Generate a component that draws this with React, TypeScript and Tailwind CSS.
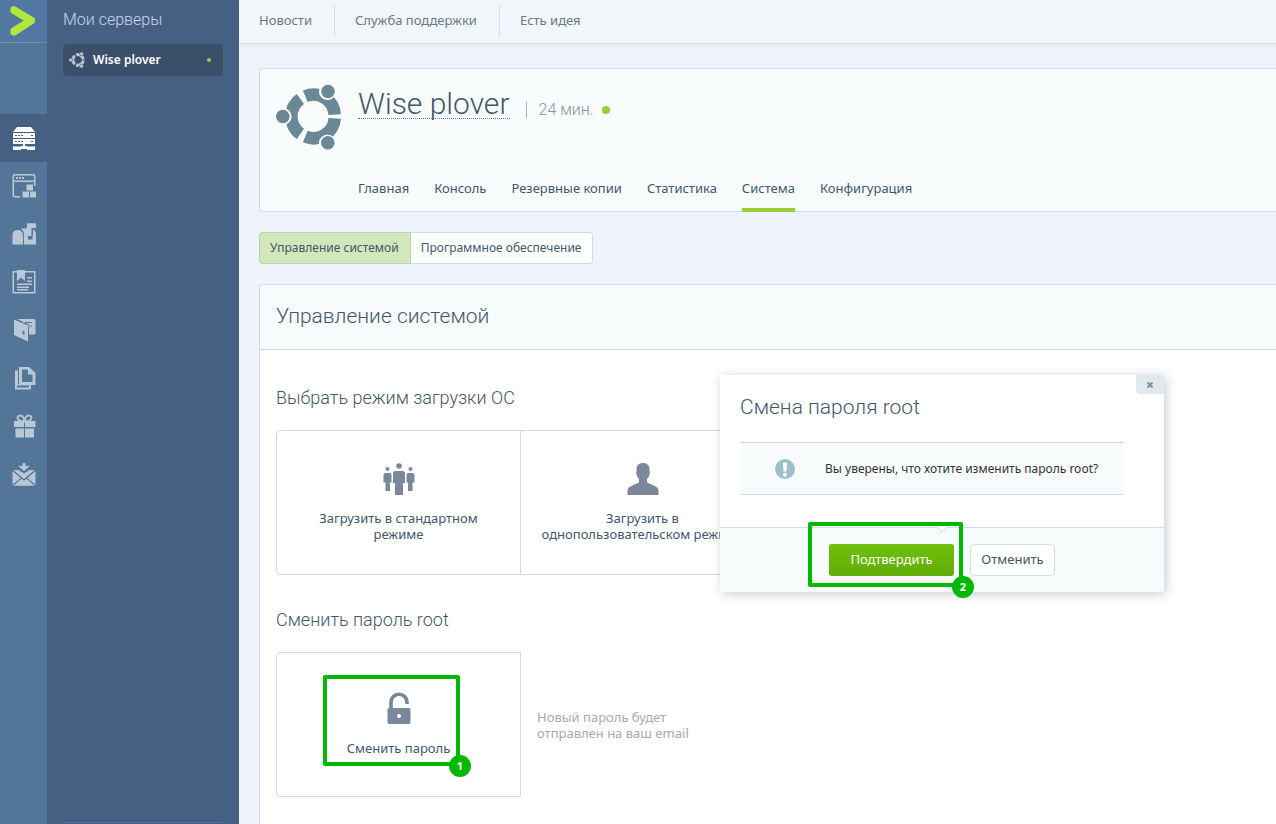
import clsx from "clsx";
import type { ReactNode } from "react";

const uiFont = "font-['Noto_Sans','Open_Sans',sans-serif]";
const headingFont = "font-[Roboto,Inter,sans-serif] font-light";

function UbuntuLogo({ className }: { className?: string }) {
  return (
    <svg viewBox="0 0 66 66" className={className} aria-hidden="true">
      <g fill="none" stroke="currentColor" strokeWidth="12.500">
        <path d="M29.3 12.2A21.3 21.3 0 0 1 58.7 30.6" />
        <path d="M58.7 34.4A21.3 21.3 0 0 1 29.3 52.6" />
        <path d="M24.4 49.8A21.3 21.3 0 0 1 24.4 15" />
      </g>
      <g className="fill-[var(--ring)]">
        <circle cx="7" cy="32.5" r="8.6" />
        <circle cx="51.5" cy="7.5" r="8.6" />
        <circle cx="51.5" cy="59" r="8.6" />
      </g>
      <g fill="currentColor">
        <circle cx="6.8" cy="32.5" r="6.8" />
        <circle cx="52" cy="7.5" r="6.8" />
        <circle cx="51.8" cy="58.8" r="6.8" />
      </g>
    </svg>
  );
}

function Icon({ children }: { children: ReactNode }) {
  return (
    <svg
      viewBox="0 0 24 24"
      width="24"
      height="24"
      fill="currentColor"
      aria-hidden="true"
    >
      {children}
    </svg>
  );
}

const railItems = [
  {
    label: "Серверы",
    icon: (
      <>
        <path d="M5 1h14l4 5H1z" />
        <path
          fillRule="evenodd"
          d="M1 7h22v5H1zM3 9v1h2V9zM6 9v1h2V9zM9 9v1h2V9zM19 9v1h2V9z"
        />
        <path
          fillRule="evenodd"
          d="M1 13h22v5H1zM3 15v1h2v-1zM6 15v1h2v-1zM9 15v1h2v-1zM19 15v1h2v-1z"
        />
        <path d="M11 18h2v2h2v.5h8v3.500h-8v-1H9v1H1v-3.500h8V20h2z" />
      </>
    ),
  },
  {
    label: "Приложения",
    icon: (
      <>
        <path
          fillRule="evenodd"
          d="M3 0h18a2.500 2.500 0 0 1 2.500 2.500V12H22V8H2v12.500A1.500 1.500 0 0 0 3.500 22H8v1.500H3A2.500 2.500 0 0 1 .5 21V2.500A2.500 2.500 0 0 1 3 0zM2 2.500v4h20v-4l-1-1H3z"
        />
        <path d="M4 3h2v2H4zM7 3h2v2H7zM10 3h2v2h-2z" />
        <path d="M14.500 10.500h6.500v6h-6.500zM10.500 17.500h6.500V23.500h-6.500zM18 17.500h6V23.500h-6z" />
      </>
    ),
  },
  {
    label: "Почта",
    icon: (
      <>
        <path d="M.5 22.500V12.500a5.300 5.300 0 0 1 10.500 0v10z" />
        <path d="M8 6.500h6.500V10H14v2.500h3.500V7h1.500V4h4.500v-2.500H15V5a7 7 0 0 0-1 1.500z" />
        <path d="M15 1.500h9v4.500h-4.500v8H16V18h-2v-2h-1V9l1.500-3H15z" />
        <path d="M8.500 6.500H14v11h6.500v-4h.5V7.500c2 .8 3 2.800 3 5v10H12v-10c0-3-1.500-5-3.500-6z" />
      </>
    ),
  },
  {
    label: "Документация",
    icon: (
      <>
        <path
          fillRule="evenodd"
          d="M.5 1H5v1.500H2V22h20V2.500h-9V1h10.500v22.500H.5z"
        />
        <path d="M5 0h8v11l-4-3.500L5 11zM15 7h5v1.500h-5zM15 10.500h5V12h-5zM5 13.500h15V15H5zM5 16.500h12V18H5zM5 19h11v1.500H5z" />
      </>
    ),
  },
  {
    label: "Кошелёк",
    icon: (
      <>
        <path
          fillRule="evenodd"
          d="M2 1.500 16 7.500V23.500L2 17zM10.500 12.500v3.500l2 1v-3.500z"
        />
        <path
          fillRule="evenodd"
          d="M5 1h17a1.500 1.500 0 0 1 1.500 1.500V15a1.500 1.500 0 0 1-1.500 1.500h-5V6.500zM11 4v1h9V4zM15 7.500v1h5v-1z"
        />
      </>
    ),
  },
  {
    label: "Документы",
    icon: (
      <>
        <path
          fillRule="evenodd"
          d="M3 4.500h3v13.500h13v5.500H3zM4.800 6.500v15h12.200v-2H4.800z"
        />
        <path d="M3 5h2v18H3z" />
        <path
          fillRule="evenodd"
          d="M7 1h10l6.500 6v12H7zM10 3.500v12.500h10.500V8.500H16v-5z"
        />
      </>
    ),
  },
  {
    label: "Подарки",
    icon: (
      <>
        <path d="M2 7h10v6H2zM13 7h10.500v6H13zM3.500 14.500H12V23.500H3.500zM13 14.500h9V23.500h-9z" />
        <g fill="none" stroke="currentColor" strokeWidth="1.900">
          <path d="M12.300 7.500C9 7.500 5.500 6 5.500 3.800S9 .3 11 3c1 1.500 1.300 3 1.300 4.500z" />
          <path d="M12.700 7.500c3.300 0 6.800-1.500 6.800-3.700S16 .3 14 3c-1 1.500-1.300 3-1.300 4.500z" />
        </g>
      </>
    ),
  },
  {
    label: "Сообщения",
    icon: (
      <>
        <path d="M10.500 1h3v3H18l-6 5L6 4h4.500z" />
        <path d="m.5 9 8.200 7-8.200 7zM23.500 9l-8.200 7 8.200 7zM1.500 8h5l5.500 3.500L17.500 8h5L12 17zM9.500 16.800l2.500 2 2.500-2 8 7h-21z" />
      </>
    ),
  },
];

const topLinks = ["Новости", "Служба поддержки", "Есть идея"];

const tabs = [
  "Главная",
  "Консоль",
  "Резервные копии",
  "Статистика",
  "Система",
  "Конфигурация",
];

function Rail() {
  return (
    <nav className="w-[47px] shrink-0 bg-[#537597]">
      <a
        href="#"
        aria-label="На главную"
        className="flex h-[43px] items-center border-b border-[#6b8fb4] bg-[#5078a2] pl-2.5"
      >
        <svg viewBox="0 0 26 30" width="26" height="30" aria-hidden="true">
          <path
            d="M1 1.500 4.500 .5 24.500 12.500v4L4.500 29.500 1 28v-5L14.500 14.500 1 6.500z"
            fill="#b3e63c"
            stroke="#b3e63c"
            strokeLinejoin="round"
          />
        </svg>
      </a>
      <ul className="mt-[71px]">
        {railItems.map(({ label, icon }, index) => (
          <li key={label}>
            <a
              href="#"
              aria-label={label}
              className={clsx(
                "flex h-12 items-center justify-center",
                index === 0 ? "bg-[#466083] text-white" : "text-[#b9c8d6]",
              )}
            >
              <Icon>{icon}</Icon>
            </a>
          </li>
        ))}
      </ul>
    </nav>
  );
}

function Sidebar() {
  return (
    <aside className="flex w-48 shrink-0 flex-col bg-[#466083] px-4">
      <h2
        className={clsx(
          headingFont,
          "flex h-10 items-center text-base text-[#c9d6e8]",
        )}
      >
        Мои серверы
      </h2>
      <a
        href="#"
        className="mt-1 flex h-8 items-center rounded bg-[#3b4f6b] px-1.5 text-xs font-semibold text-white"
      >
        <UbuntuLogo className="size-4 text-[#b9c3d0] [--ring:#3b4f6b]" />
        <span className="ml-2 grow">Wise plover</span>
        <span className="mr-1.5 size-1 rounded-full bg-[#9acd32]" />
      </a>
      <hr className="mt-auto mb-px border-[#55739a]" />
    </aside>
  );
}

function Step({ n }: { n: number }) {
  return (
    <span className="absolute -right-[15px] -bottom-[15px] flex size-[22px] items-center justify-center rounded-full bg-[#00b800] text-[11px] font-bold text-white">
      {n}
    </span>
  );
}

function Tile({ icon, children }: { icon: ReactNode; children: ReactNode }) {
  return (
    <button
      type="button"
      className="flex h-[145px] w-[245px] flex-col items-center border border-[#cfdde2] px-4 pt-8 text-[13px] leading-4 text-[#43566b]"
    >
      <span className="mb-[15px] text-[#7b879b]">{icon}</span>
      {children}
    </button>
  );
}

function SectionTitle({ children }: { children: ReactNode }) {
  return (
    <h3 className={clsx(headingFont, "mb-[18px] text-lg leading-7")}>
      {children}
    </h3>
  );
}

function ServerCard() {
  return (
    <section className="rounded-l border border-r-0 border-[#cfdde2] bg-[#f8fcfd] px-4 pt-[15px]">
      <div className="flex h-[88px]">
        <UbuntuLogo className="size-[66px] text-[#6b8896] [--ring:#f8fcfd]" />
        <div className="ml-4 flex h-10 items-center">
          <h1
            className={clsx(
              headingFont,
              "border-b border-dotted border-[#5b8296] text-[30px] leading-7",
            )}
          >
            Wise plover
          </h1>
          <span
            className={clsx(
              headingFont,
              "mt-3 ml-4 flex items-center text-base leading-5 text-[#7f959f]",
            )}
          >
            <span className="mr-3 h-4 w-px bg-[#a5b7c0]" />
            24 мин.
            <span className="ml-2 size-2 rounded-full bg-[#9acd32]" />
          </span>
        </div>
      </div>
      <nav className="-mb-px ml-[82px] flex gap-[25px] text-[13px]">
        {tabs.map((tab) => (
          <a
            key={tab}
            href="#"
            className={clsx(
              "h-10 border-b-4 pt-[7px]",
              tab === "Система" ? "border-[#9acd32]" : "border-transparent",
            )}
          >
            {tab}
          </a>
        ))}
      </nav>
    </section>
  );
}

function ConfirmDialog() {
  return (
    <div
      role="dialog"
      aria-labelledby="dialog-title"
      className="absolute top-[375px] left-[481px] w-[444px] rounded bg-white shadow-[2px_2px_12px_rgba(60,90,100,0.3)]"
    >
      <button
        type="button"
        aria-label="Закрыть"
        className="absolute top-0 right-0 flex h-[19px] w-7 items-center justify-center rounded-tr rounded-bl bg-[#e0eaed] text-[#7b949f]"
      >
        <svg viewBox="0 0 8 8" width="8" height="8" aria-hidden="true">
          <path d="m1.500 1.500 5 5M6.500 1.500l-5 5" stroke="currentColor" strokeWidth="2" />
        </svg>
      </button>
      <div className="px-5 pt-4 pb-8">
        <h2
          id="dialog-title"
          className={clsx(headingFont, "text-[21px] leading-8")}
        >
          Смена пароля root
        </h2>
        <div className="mt-[19px] mr-5 flex h-[53px] items-center gap-[30px] border-y border-[#cfdde2] bg-[#f7fbfc] pl-[35px] text-xs text-[#333]">
          <svg viewBox="0 0 20 20" width="20" height="20" aria-hidden="true">
            <circle cx="10" cy="10" r="10" fill="#9bbfcb" />
            <path d="M8 3.500h4l-.5 9h-3z" fill="#fff" />
            <circle cx="10" cy="15.700" r="2" fill="#fff" />
          </svg>
          <p className="whitespace-nowrap">
            Вы уверены, что хотите изменить пароль root?
          </p>
        </div>
      </div>
      <div className="relative flex h-[65px] items-center justify-center gap-4 rounded-b border-t border-[#cfdde2] bg-[#f7fbfc] text-[13px]">
        <svg
          viewBox="0 0 10 6"
          width="10"
          height="6"
          className="absolute -top-px left-[217px]"
          aria-hidden="true"
        >
          <path d="M0 0h10L5 5.500z" fill="#fff" />
          <path d="M.5 .5 5 5.500 9.500 .5" fill="none" stroke="#cfdde2" />
        </svg>
        <button
          type="button"
          className="h-8 w-[125px] rounded-[3px] bg-linear-to-b from-[#6fc00a] to-[#62ab08] text-white"
        >
          Подтвердить
        </button>
        <button
          type="button"
          className="h-8 w-[85px] rounded border border-[#cfdde2] bg-white"
        >
          Отменить
        </button>
        <div className="pointer-events-none absolute -top-1.5 left-[88px] h-[65px] w-[155px] rounded-xs border-4 border-[#00b800]">
          <Step n={2} />
        </div>
      </div>
    </div>
  );
}

export default function App() {
  return (
    <div className={clsx(uiFont, "flex min-h-screen text-[#43566b]")}>
      <Rail />
      <Sidebar />
      <div className="relative flex min-w-0 grow flex-col bg-[#eff3fb]">
        <header className="flex h-11 items-center border-b border-[#cfdfe2] bg-[#f1f6fa] shadow-[0_2px_4px_rgba(80,110,120,0.08)]">
          <nav className="mb-0.5 flex text-[13px] text-[#68788c]">
            {topLinks.map((link, index) => (
              <a
                key={link}
                href="#"
                className={clsx(
                  "flex h-8 items-center pr-[22px] pl-5",
                  index > 0 && "border-l border-[#d5e1e6]",
                )}
              >
                {link}
              </a>
            ))}
          </nav>
        </header>

        <main className="flex grow flex-col gap-5 pt-6 pl-5">
          <ServerCard />

          <div className="flex text-xs">
            <button
              type="button"
              className="h-8 rounded-l border border-[#b9d3a4] bg-[#d0e8bc] pr-[11px] pl-2.5"
            >
              Управление системой
            </button>
            <button
              type="button"
              className="h-8 rounded-r border border-l-0 border-[#cfdde6] bg-white pr-[11px] pl-2.5"
            >
              Программное обеспечение
            </button>
          </div>

          <section className="grow rounded-tl border-t border-l border-[#cfdde6] bg-white">
            <h2
              className={clsx(
                headingFont,
                "flex h-[65px] items-center rounded-tl border-b border-[#cfdde2] bg-[#f7fbfc] px-4 text-[21px]",
              )}
            >
              Управление системой
            </h2>
            <div className="px-4 pt-[34px]">
              <SectionTitle>Выбрать режим загрузки ОС</SectionTitle>
              <div className="flex *:first:rounded-l *:last:-ml-px *:last:rounded-r">
                <Tile
                  icon={
                    <svg width="32" height="32" viewBox="0 0 32 32" fill="currentColor">
                      <circle cx="16" cy="3" r="2.800" />
                      <path d="M12.500 8h7q2.500 0 2.500 2.500V20h-2v12h-8V20h-2v-9.500Q10 8 12.500 8z" />
                      <circle cx="4.500" cy="6" r="2" />
                      <path d="M2 10h5q1.500 0 1.500 2v7.500H7V28H2.500v-8.500H.5V12Q.5 10 2 10z" />
                      <circle cx="27.500" cy="6" r="2" />
                      <path d="M25 10h5q1.500 0 1.500 2v7.500h-2V28H25v-8.500h-1.500V12q0-2 1.500-2z" />
                    </svg>
                  }
                >
                  Загрузить в стандартном режиме
                </Tile>
                <Tile
                  icon={
                    <svg width="32" height="32" viewBox="0 0 32 32" fill="currentColor">
                      <path d="M16 0c4 0 6.500 2.500 6.500 6v2.500q1 1 0 3Q22 14 20 16v3c1 2 11.500 3.500 11.500 8.500V32H.5v-4.500c0-5 10.500-6.500 11.500-8.500v-3q-2-2-2.500-4.500-1-2 0-3V6c0-3.500 2.500-6 6.500-6z" />
                    </svg>
                  }
                >
                  Загрузить в однопользовательском режиме
                </Tile>
              </div>

              <div className="mt-[31px]">
                <SectionTitle>Сменить пароль root</SectionTitle>
              </div>
              <div className="flex items-center gap-4">
                <div className="relative *:first:rounded-l">
                  <Tile
                    icon={
                      <svg width="32" height="40" viewBox="0 0 32 40" fill="currentColor">
                        <path
                          d="M8 26V17.500a8 8 0 0 1 16-.5v2"
                          fill="none"
                          stroke="currentColor"
                          strokeWidth="3.600"
                        />
                        <path
                          fillRule="evenodd"
                          d="M6 23h20q1.500 0 1.500 1.500V37q0 2-1.500 2H6q-1.500 0-1.500-2V24.500Q4.500 23 6 23zM16 29a2 2 0 1 0 .01 0z"
                        />
                      </svg>
                    }
                  >
                    Сменить пароль
                  </Tile>
                  <div className="pointer-events-none absolute top-[23px] left-[47px] h-[91px] w-[137px] rounded-xs border-4 border-[#00b800]">
                    <Step n={1} />
                  </div>
                </div>
                <p className="w-44 text-[13px] leading-4 text-[#a6a9ac]">
                  Новый пароль будет отправлен на ваш email
                </p>
              </div>
            </div>
          </section>
        </main>
        <ConfirmDialog />
      </div>
    </div>
  );
}
